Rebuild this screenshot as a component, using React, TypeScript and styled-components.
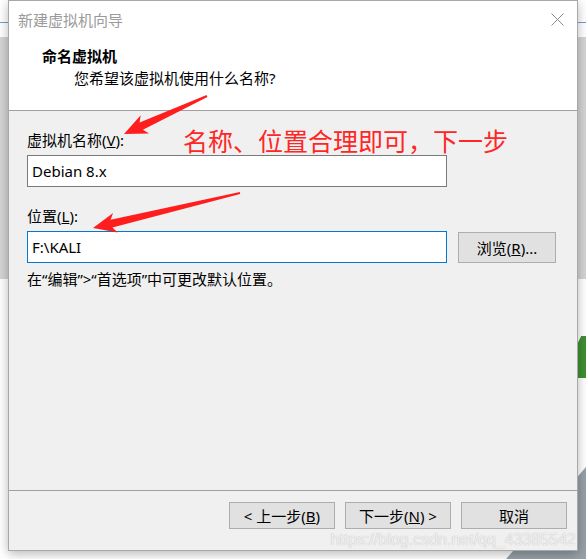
import React from 'react';
import styled, { createGlobalStyle } from 'styled-components';

const FONT = `"Noto Sans", "Noto Sans CJK SC", sans-serif`;

const GlobalStyle = createGlobalStyle`
  html, body {
    margin: 0;
    padding: 0;
    background: #ffffff;
  }
  body {
    font-family: ${FONT};
    overflow: hidden;
  }
`;

type Pt = [number, number];

// tapered red arrow, tail -> tip
const arrowPoints = (tail: Pt, tip: Pt) => {
  const dx = tip[0] - tail[0];
  const dy = tip[1] - tail[1];
  const len = Math.hypot(dx, dy);
  const ux = dx / len;
  const uy = dy / len;
  const nx = -uy;
  const ny = ux;
  const at = (d: number, w: number) =>
    `${(tail[0] + ux * d + nx * w).toFixed(1)},${(tail[1] + uy * d + ny * w).toFixed(1)}`;
  return [
    at(0, 1),
    at(len - 19, 4),
    at(len - 23, 10),
    at(len, 0),
    at(len - 23, -10),
    at(len - 19, -4),
    at(0, -1),
  ].join(' ');
};

const App: React.FC = () => {
  return (
    <Page>
      <GlobalStyle />
      <DeskStrip side="left" />
      <DeskStrip side="right" />
      <DeskLine />
      <GreenTile />
      <SlateCorner />

      <Window>
        <Header>
          <TitleBar>
            <span>新建虚拟机向导</span>
            <svg width="13" height="13" viewBox="0 0 13 13">
              <path d="M0.5 0.5 L12.5 12.5 M12.5 0.5 L0.5 12.5" stroke="#8a8a8a" strokeWidth="1" fill="none" />
            </svg>
          </TitleBar>
          <Heading>命名虚拟机</Heading>
          <Subtitle>您希望该虚拟机使用什么名称?</Subtitle>
        </Header>

        <Body>
          <Label>
            虚拟机名称(<u>V</u>):
          </Label>
          <Field>Debian 8.x</Field>
          <Label gap={19}>
            位置(<u>L</u>):
          </Label>
          <Row>
            <Field focused>F:\KALI</Field>
            <Button wide={98} tall={31}>
              浏览(<u>R</u>)...
            </Button>
          </Row>
          <Hint>在“编辑”&gt;“首选项”中可更改默认位置。</Hint>
        </Body>

        <Footer>
          <Button>
            &lt; 上一步(<u>B</u>)
          </Button>
          <Button>
            下一步(<u>N</u>) &gt;
          </Button>
          <Button>取消</Button>
        </Footer>
      </Window>

      <Annotation>名称、位置合理即可，下一步</Annotation>
      <Arrows width="586" height="559" viewBox="0 0 586 559">
        <polygon points={arrowPoints([207, 96], [124, 134])} fill="#ff1e1e" />
        <polygon points={arrowPoints([240, 193], [93, 228])} fill="#ff1e1e" />
      </Arrows>
      <Watermark>https://blog.csdn.net/qq_43385542</Watermark>
    </Page>
  );
};

const Page = styled.div`
  position: relative;
  width: 586px;
  height: 559px;
  box-sizing: border-box;
  padding-left: 8px;
  overflow: hidden;
  background: #ffffff;
`;

const DeskStrip = styled.div<{ side: 'left' | 'right' }>`
  position: absolute;
  top: 37px;
  height: 242px;
  width: 14px;
  background: #d4d4d4;
  ${({ side }) => (side === 'left' ? 'left: 0;' : 'right: 0;')}
`;

const DeskLine = styled.div`
  position: absolute;
  top: 22px;
  left: 0;
  right: 0;
  height: 1px;
  background: #6f9fd6;
`;

const GreenTile = styled.div`
  position: absolute;
  top: 336px;
  right: 0;
  width: 12px;
  height: 42px;
  background: #3f8f32;
  clip-path: polygon(60% 0, 100% 0, 100% 100%, 0 100%, 0 35%);
`;

const SlateCorner = styled.div`
  position: absolute;
  right: 0;
  bottom: 0;
  width: 80px;
  height: 92px;
  background: #97a0a8;
  clip-path: polygon(100% 0, 100% 100%, 0 100%);
`;

const Window = styled.div`
  position: relative;
  z-index: 1;
  width: 570px;
  height: 551px;
  box-sizing: border-box;
  border: 1px solid #a8a8a8;
  background: #f0f0f0;
  display: flex;
  flex-direction: column;
  box-shadow: 0 3px 10px rgba(0, 0, 0, 0.28);
`;

const Header = styled.div`
  height: 109px;
  background: #ffffff;
  border-bottom: 1px solid #a0a0a0;
`;

const TitleBar = styled.div`
  height: 36px;
  display: flex;
  align-items: center;
  justify-content: space-between;
  padding: 0 13px 0 9px;
  font-size: 15px;
  color: #9a9a9a;
`;

const Heading = styled.div`
  margin: 9px 0 0 33px;
  font-size: 15px;
  line-height: 20px;
  font-weight: bold;
  color: #000;
`;

const Subtitle = styled.div`
  margin: 2px 0 0 65px;
  font-size: 15px;
  line-height: 20px;
  color: #000;
`;

const Body = styled.div`
  flex: 1;
  padding: 19px 0 0 18px;
`;

const Label = styled.div<{ gap?: number }>`
  margin-top: ${({ gap }) => gap ?? 0}px;
  font-size: 15px;
  line-height: 20px;
  color: #000;
`;

const Field = styled.div<{ focused?: boolean }>`
  margin-top: 5px;
  width: 420px;
  height: 32px;
  box-sizing: border-box;
  border: 1px solid ${({ focused }) => (focused ? '#0078d7' : '#7a7a7a')};
  background: #ffffff;
  padding: 0 4px;
  display: flex;
  align-items: center;
  font-size: 15px;
  color: #000;
`;

const Row = styled.div`
  display: flex;
  align-items: flex-end;
  gap: 11px;
`;

const Hint = styled.div`
  margin-top: 6px;
  font-size: 15px;
  line-height: 20px;
  color: #000;
`;

const Footer = styled.div`
  height: 48px;
  border-top: 1px solid #a0a0a0;
  display: flex;
  justify-content: flex-end;
  align-items: flex-start;
  gap: 10px;
  padding: 11px 10px 0 0;
`;

const Button = styled.button<{ wide?: number; tall?: number }>`
  width: ${({ wide }) => wide ?? 106}px;
  height: ${({ tall }) => tall ?? 27}px;
  box-sizing: border-box;
  border: 1px solid #adadad;
  background: #e1e1e1;
  padding: 0;
  font-family: ${FONT};
  font-size: 15px;
  color: #000;
`;

const Annotation = styled.div`
  position: absolute;
  z-index: 2;
  left: 183px;
  top: 125px;
  font-family: "Noto Sans CJK SC", sans-serif;
  font-size: 25px;
  line-height: 30px;
  color: #ff2626;
`;

const Arrows = styled.svg`
  position: absolute;
  z-index: 2;
  left: 0;
  top: 0;
  pointer-events: none;
`;

const Watermark = styled.div`
  position: absolute;
  z-index: 3;
  right: 10px;
  bottom: 10px;
  font-family: "Liberation Sans", Arial, sans-serif;
  font-size: 16px;
  color: rgba(255, 255, 255, 0.8);
  text-shadow: 0 0 1px rgba(0, 0, 0, 0.3);
`;

export default App;
